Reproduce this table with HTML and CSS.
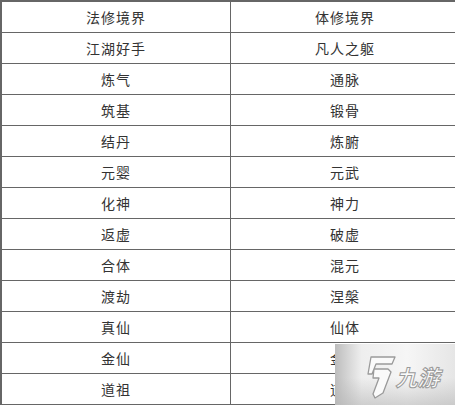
FILE: index.html
```html
<!DOCTYPE html>
<html>
<head>
<meta charset="utf-8">
<link rel="stylesheet" href="styles.css">
</head>
<body>
<table class="realm">
  <tr><td>法修境界</td><td>体修境界</td></tr>
  <tr><td>江湖好手</td><td>凡人之躯</td></tr>
  <tr><td>炼气</td><td>通脉</td></tr>
  <tr><td>筑基</td><td>锻骨</td></tr>
  <tr><td>结丹</td><td>炼腑</td></tr>
  <tr><td>元婴</td><td>元武</td></tr>
  <tr><td>化神</td><td>神力</td></tr>
  <tr><td>返虚</td><td>破虚</td></tr>
  <tr><td>合体</td><td>混元</td></tr>
  <tr><td>渡劫</td><td>涅槃</td></tr>
  <tr><td>真仙</td><td>仙体</td></tr>
  <tr><td>金仙</td><td>金身</td></tr>
  <tr><td>道祖</td><td>道体</td></tr>
</table>
<div class="watermark">
  <svg class="wm-logo" width="34" height="44" viewBox="0 0 34 44">
    <path d="M9 2 L33 2 L30 9 L14 9 L10 19 L6 19 Z M12 14 L26 14 L29 17 L21 38 L13 43 L11 39 L17 23 L11 23 Z" fill="#fafafa" stroke="#9a9a9a" stroke-width="1.3" stroke-linejoin="round"/>
  </svg>
  <span class="wm-text">九游</span>
</div>
</body>
</html>
```
FILE: styles.css
```css
html, body {
  margin: 0;
  padding: 0;
  background: #ffffff;
  overflow: hidden;
}
body {
  width: 455px;
  height: 405px;
  position: relative;
  font-family: "Noto Sans CJK SC", "DejaVu Sans", sans-serif;
}
.realm {
  border-collapse: separate;
  border-spacing: 0;
  border-top: 2px solid #666666;
  border-left: 2px solid #666666;
  width: 460px;
  table-layout: fixed;
}
.realm td {
  height: 30px;
  padding: 0;
  border-right: 1px solid #666666;
  border-bottom: 1px solid #666666;
  text-align: center;
  vertical-align: middle;
  font-size: 14px;
  letter-spacing: 1px;
  color: #333333;
  line-height: 30px;
}
.realm td:first-child {
  width: 228px;
}
.watermark {
  position: absolute;
  left: 335px;
  top: 344px;
  width: 120px;
  height: 61px;
  background:
    linear-gradient(to bottom, rgba(255,255,255,0) 55%, rgba(180,180,180,0.55) 100%),
    linear-gradient(to right, #bdbdbd 0%, #eeeeee 22%, #f6f6f6 60%, #e6e6e6 100%);
  display: flex;
  align-items: center;
  gap: 2px;
  padding-left: 27px;
  box-sizing: border-box;
}
.wm-logo {
  display: block;
  margin-top: 4px;
}
.wm-text {
  font-family: "Noto Sans CJK SC", sans-serif;
  font-size: 22px;
  font-weight: 700;
  color: #fafafa;
  -webkit-text-stroke: 1px #9a9a9a;
  transform: skewX(-14deg);
  letter-spacing: 0;
  margin-top: 2px;
  white-space: nowrap;
}
```
